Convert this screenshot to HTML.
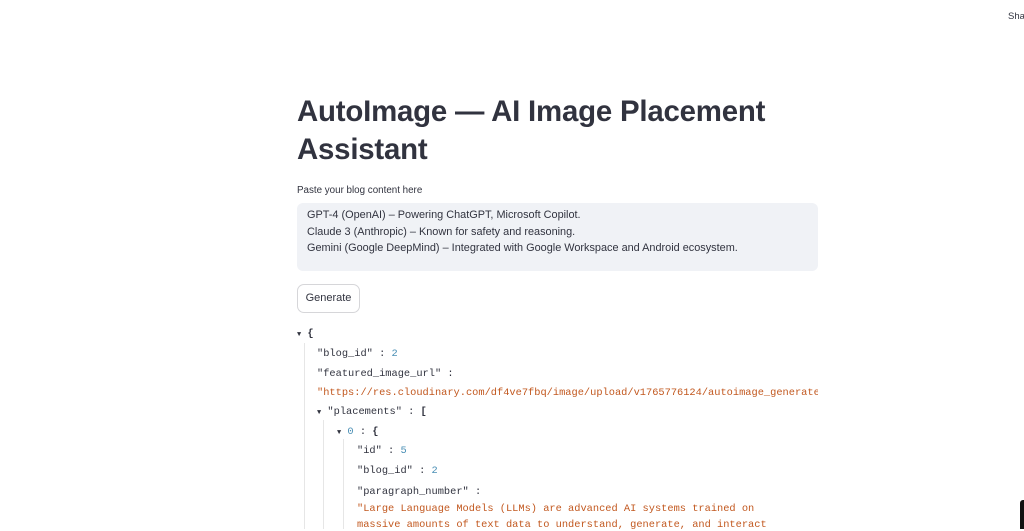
<!DOCTYPE html>
<html><head><meta charset="utf-8"><style>
body{margin:0;width:1024px;height:529px;overflow:hidden;background:#fff;font-family:"Liberation Sans",sans-serif;color:#31333f;position:relative}
.a{position:absolute}
h1{position:absolute;left:297px;top:93px;margin:0;font-size:29.4px;line-height:38px;font-weight:700;color:#31333f;letter-spacing:-0.2px}
.ta{left:297px;top:203px;width:521px;height:68px;background:#f0f2f6;border-radius:6px;font-size:10.9px;line-height:16.5px;padding:4px 10px;box-sizing:border-box}
.btn{left:297px;top:284px;width:63px;height:29px;border:1px solid #d6d6d9;border-radius:7px;box-sizing:border-box;font-size:11px;line-height:27px;text-align:center}
.m{font-family:"Liberation Mono",monospace;font-size:10.35px;white-space:pre;position:absolute}
.k{color:#31333f}.s{color:#c2581f}.n{color:#4a8fb5}
.v{position:absolute;width:1px;background:#e6e6e6}
.t{font-size:7px}
</style></head><body>
<div class="a" style="left:1008px;top:11px;font-size:9.5px;color:#31333f">Sha</div>
<h1>AutoImage — AI Image Placement<br>Assistant</h1>
<div class="a" style="left:297px;top:185px;font-size:9.8px">Paste your blog content here</div>
<div class="a ta">GPT-4 (OpenAI) – Powering ChatGPT, Microsoft Copilot.<br>Claude 3 (Anthropic) – Known for safety and reasoning.<br>Gemini (Google DeepMind) – Integrated with Google Workspace and Android ecosystem.</div>
<div class="a btn">Generate</div>
<div class="v" style="left:304px;top:343px;height:186px"></div>
<div class="v" style="left:323px;top:420px;height:109px"></div>
<div class="v" style="left:343px;top:439px;height:90px"></div>
<div class="m k" style="left:297px;top:328px"><span class="t">▼</span> <b>{</b></div>
<div class="m" style="left:317px;top:348px"><span class="k">"blog_id"</span> : <span class="n">2</span></div>
<div class="m k" style="left:317px;top:368px">"featured_image_url" :</div>
<div class="m s" style="left:317px;top:387px;width:501px;overflow:hidden">"https://res.cloudinary.com/df4ve7fbq/image/upload/v1765776124/autoimage_generated</div>
<div class="m k" style="left:317px;top:406px"><span class="t">▼</span> "placements" : <b>[</b></div>
<div class="m k" style="left:337px;top:426px"><span class="t">▼</span> <span class="n">0</span> : <b>{</b></div>
<div class="m" style="left:357px;top:445px"><span class="k">"id"</span> : <span class="n">5</span></div>
<div class="m" style="left:357px;top:465px"><span class="k">"blog_id"</span> : <span class="n">2</span></div>
<div class="m k" style="left:357px;top:486px">"paragraph_number" :</div>
<div class="m s" style="left:357px;top:503px">"Large Language Models (LLMs) are advanced AI systems trained on</div>
<div class="m s" style="left:357px;top:519px">massive amounts of text data to understand, generate, and interact</div>
<div class="a" style="left:1020px;top:500px;width:4px;height:29px;background:#111;border-radius:3px 0 0 0"></div>
</body></html>
